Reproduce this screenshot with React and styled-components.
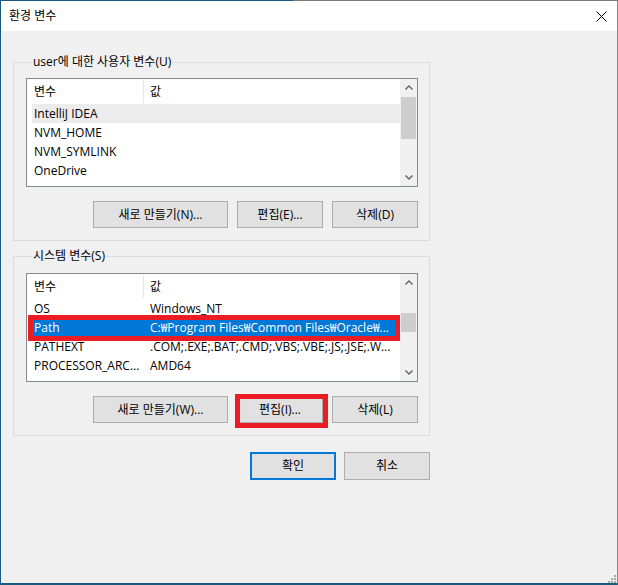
import React from "react";
import styled, { createGlobalStyle } from "styled-components";

const Global = createGlobalStyle`
  html, body { margin: 0; padding: 0; background: #f0f0f0; }
  body {
    font-family: "Open Sans", "Noto Sans CJK KR", sans-serif;
    font-size: 12px;
    color: #000;
  }
  * { box-sizing: border-box; }
`;

const Window = styled.div`
  position: relative;
  width: 618px;
  height: 585px;
  background: #f0f0f0;
  border-left: 1px solid #1b5a7c;
  border-right: 1px solid #858585;
  border-bottom: 2px solid #1b5a7c;
  display: flex;
  flex-direction: column;
`;

const TopEdge = styled.div`
  flex: none;
  height: 1px;
  background: linear-gradient(to right, #1b5a7c 292px, #7a7a7a 292px);
`;

const TitleBar = styled.div`
  flex: none;
  height: 30px;
  background: #fff;
  display: flex;
  align-items: center;
  justify-content: space-between;
  padding: 0 10px 0 8px;
`;

const Title = styled.span`
  font-size: 12px;
  line-height: 16px;
`;

const Body = styled.div`
  flex: 1;
  padding: 23px 0 0 12px;
  display: flex;
  flex-direction: column;
`;

const Group = styled.fieldset`
  width: 417px;
  margin: ${(p) => p.$mt}px 0 0 0;
  padding: ${(p) => p.$pt}px 11px 12px 12px;
  border: 1px solid #dcdcdc;
  min-inline-size: 0;
`;

const Legend = styled.legend`
  margin-left: 6px;
  padding: 0 1px;
  font-size: 12px;
  line-height: 16px;
`;

const List = styled.div`
  height: 109px;
  border: 1px solid #828790;
  background: #fff;
  display: flex;
  overflow: hidden;
`;

const ListBody = styled.div`
  flex: 1;
  min-width: 0;
  display: flex;
  flex-direction: column;
`;

const Header = styled.div`
  flex: none;
  height: 25px;
  display: flex;
`;

const HeadCell = styled.div`
  width: ${(p) => (p.$w ? `${p.$w}px` : "auto")};
  flex: ${(p) => (p.$w ? "none" : "1")};
  padding-left: ${(p) => p.$pl}px;
  line-height: 24px;
  border-right: ${(p) => (p.$sep ? "1px solid #e5e5e5" : "none")};
  margin: 1px 0 1px;
`;

const Row = styled.div`
  position: relative;
  flex: none;
  height: 19px;
  margin-left: 5px;
  display: flex;
  align-items: center;
  white-space: nowrap;
  background: ${(p) =>
    p.$state === "selected" ? "#0078d7" : p.$state === "hover" ? "#ececec" : "transparent"};
  color: ${(p) => (p.$state === "selected" ? "#fff" : "#000")};
`;

const NameCell = styled.span`
  flex: none;
  width: 118px;
  padding-left: 2px;
  overflow: hidden;
  line-height: 19px;
`;

const ValueCell = styled.span`
  flex: 1;
  min-width: 0;
  overflow: hidden;
  line-height: 19px;
`;

const Mark = styled.span`
  position: absolute;
  left: ${(p) => p.$l}px;
  top: ${(p) => p.$t}px;
  width: ${(p) => p.$w}px;
  height: ${(p) => p.$h}px;
  border: 5px solid #ec1c24;
  pointer-events: none;
`;

const ScrollBar = styled.div`
  flex: none;
  width: 17px;
  background: #f0f0f0;
  display: flex;
  flex-direction: column;
`;

const ArrowBtn = styled.div`
  flex: none;
  height: 17px;
  display: flex;
  align-items: center;
  justify-content: center;
`;

const Track = styled.div`
  flex: 1;
  display: flex;
  flex-direction: column;
`;

const Thumb = styled.div`
  flex: none;
  margin: ${(p) => p.$top}px 1px 0 1px;
  height: ${(p) => p.$h}px;
  background: #cdcdcd;
`;

const ButtonRow = styled.div`
  display: flex;
  justify-content: flex-end;
  gap: ${(p) => p.$gap}px;
  margin-top: ${(p) => p.$mt}px;
  width: ${(p) => (p.$w ? `${p.$w}px` : "auto")};
`;

const Button = styled.button`
  position: relative;
  width: ${(p) => p.$w}px;
  height: ${(p) => p.$h || 27}px;
  margin: 0;
  padding: 0;
  background: #e1e1e1;
  border: ${(p) => (p.$default ? "2px solid #0078d7" : "1px solid #adadad")};
  font-family: "Open Sans", "Noto Sans CJK KR", sans-serif;
  font-size: 12px;
  color: #000;
  display: flex;
  align-items: center;
  justify-content: center;
  line-height: 16px;
`;

const Grip = styled.svg`
  position: absolute;
  right: 1px;
  bottom: 0;
`;

const Chevron = ({ up }) => (
  <svg width="8" height="5" viewBox="0 0 8 5">
    <polyline
      points={up ? "0.5,4.5 4,1 7.5,4.5" : "0.5,0.5 4,4 7.5,0.5"}
      fill="none"
      stroke="#606060"
      strokeWidth="1.4"
    />
  </svg>
);

const VarList = ({ rows, thumbTop, thumbH }) => (
  <List>
    <ListBody>
      <Header>
        <HeadCell $w={117} $pl={7} $sep>
          변수
        </HeadCell>
        <HeadCell $pl={6}>값</HeadCell>
      </Header>
      {rows.map((r, i) => (
        <Row key={i} $state={r.state}>
          <NameCell>{r.name}</NameCell>
          <ValueCell>{r.value}</ValueCell>
          {r.mark && <Mark $l={-4} $t={-3} $w={372} $h={26} />}
        </Row>
      ))}
    </ListBody>
    <ScrollBar>
      <ArrowBtn>
        <Chevron up />
      </ArrowBtn>
      <Track>
        <Thumb $top={thumbTop} $h={thumbH} />
      </Track>
      <ArrowBtn>
        <Chevron />
      </ArrowBtn>
    </ScrollBar>
  </List>
);

const userVars = [
  { name: "IntelliJ IDEA", value: "", state: "hover" },
  { name: "NVM_HOME", value: "" },
  { name: "NVM_SYMLINK", value: "" },
  { name: "OneDrive", value: "" },
];

const sysVars = [
  { name: "OS", value: "Windows_NT" },
  {
    name: "Path",
    value: "C:₩Program Files₩Common Files₩Oracle₩...",
    state: "selected",
    mark: true,
  },
  { name: "PATHEXT", value: ".COM;.EXE;.BAT;.CMD;.VBS;.VBE;.JS;.JSE;.W..." },
  { name: "PROCESSOR_ARC...", value: "AMD64" },
];

export default function App() {
  return (
    <>
      <Global />
      <Window>
        <TopEdge />
        <TitleBar>
          <Title>환경 변수</Title>
          <svg width="11" height="11" viewBox="0 0 11 11">
            <path d="M0.5 0.5 L10.5 10.5 M10.5 0.5 L0.5 10.5" stroke="#000" strokeWidth="1" />
          </svg>
        </TitleBar>
        <Body>
          <Group $mt={0} $pt={8}>
            <Legend>user에 대한 사용자 변수(U)</Legend>
            <VarList rows={userVars} thumbTop={1} thumbH={42} />
            <ButtonRow $gap={9} $mt={14}>
              <Button $w={135}>새로 만들기(N)...</Button>
              <Button $w={86}>편집(E)...</Button>
              <Button $w={86}>삭제(D)</Button>
            </ButtonRow>
          </Group>
          <Group $mt={7} $pt={9}>
            <Legend>시스템 변수(S)</Legend>
            <VarList rows={sysVars} thumbTop={22} thumbH={19} />
            <ButtonRow $gap={9} $mt={14}>
              <Button $w={135}>새로 만들기(W)...</Button>
              <Button $w={86}>
                편집(I)...
                <Mark $l={-3} $t={-3} $w={93} $h={34} />
              </Button>
              <Button $w={86}>삭제(L)</Button>
            </ButtonRow>
          </Group>
          <ButtonRow $gap={8} $mt={16} $w={417}>
            <Button $w={86} $h={28} $default>
              확인
            </Button>
            <Button $w={86} $h={28}>
              취소
            </Button>
          </ButtonRow>
        </Body>
        <Grip width="10" height="10" viewBox="0 0 10 10">
          <g fill="#a8a8a8">
            <rect x="8" y="2" width="2" height="2" />
            <rect x="5" y="5" width="2" height="2" />
            <rect x="8" y="5" width="2" height="2" />
            <rect x="2" y="8" width="2" height="2" />
            <rect x="5" y="8" width="2" height="2" />
            <rect x="8" y="8" width="2" height="2" />
          </g>
        </Grip>
      </Window>
    </>
  );
}
